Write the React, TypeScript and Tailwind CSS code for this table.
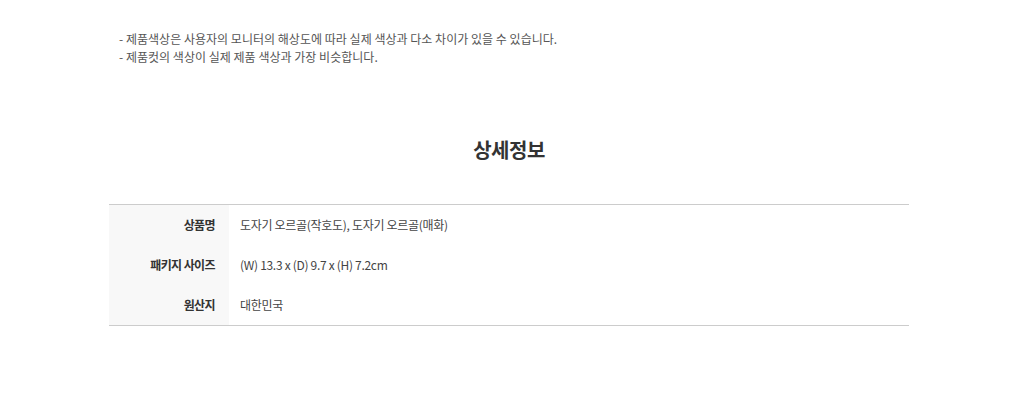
import React from 'react';

const rows = [
  { label: '상품명', value: '도자기 오르골(작호도), 도자기 오르골(매화)' },
  { label: '패키지 사이즈', value: '(W) 13.3 x (D) 9.7 x (H) 7.2cm' },
  { label: '원산지', value: '대한민국' },
];

const App: React.FC = () => {
  return (
    <div className="w-full min-h-screen bg-white font-['Noto_Sans_CJK_KR','Noto_Sans',sans-serif]">
      <div className="w-[800px] ml-[109px] pt-[30px]">
        <ul className="px-[10px] text-[12px] leading-[18px] text-[#555] tracking-[0.02px]">
          <li>- 제품색상은 사용자의 모니터의 해상도에 따라 실제 색상과 다소 차이가 있을 수 있습니다.</li>
          <li>- 제품컷의 색상이 실제 제품 색상과 가장 비슷합니다.</li>
        </ul>

        <h2 className="mt-[69px] text-center text-[20px] leading-[30px] font-bold text-[#333] tracking-[-0.5px]">상세정보</h2>

        <table className="mt-[39px] w-full border-t border-b border-[#ccc] border-separate border-spacing-0 text-[12px] tracking-[-0.3px]">
          <tbody>
            {rows.map((r) => (
              <tr key={r.label} className="h-[40px]">
                <th className="w-[120px] bg-[#f8f8f8] pr-[14px] text-right font-bold text-[#333] tracking-[-0.6px]">{r.label}</th>
                <td className="pl-[11px] text-left text-[#444]">{r.value}</td>
              </tr>
            ))}
          </tbody>
        </table>
      </div>
    </div>
  );
};

export default App;
